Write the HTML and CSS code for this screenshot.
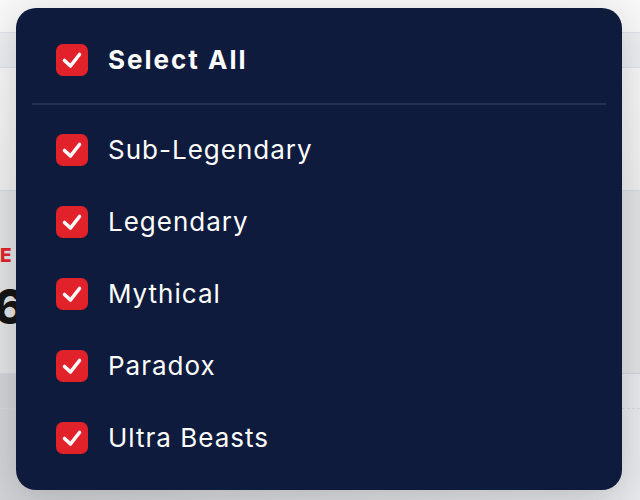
FILE: index.html
```html
<!DOCTYPE html>
<html lang="en">
<head>
    <meta charset="UTF-8">
    <meta name="viewport" content="width=device-width, initial-scale=1.0">
    <title>Pokemon Filter</title>
    <link rel="stylesheet" href="styles.css">
</head>
<body>
    <div id="page">
        <div class="top-bar"></div>
        <div class="tab-bar"></div>
        <div class="hero"></div>
        <div class="stats">
            <div class="stat-label">EXCLUSIVE</div>
            <div class="stat-value">36</div>
        </div>
        <div class="list-area">
            <div class="list-row"></div>
        </div>

        <!-- Category filter dropdown -->
        <div class="filter-menu">
            <label class="filter-item select-all">
                <span class="check">
                    <svg viewBox="0 0 32 32"><polyline points="8.5,16.5 14.5,22 23.5,10.5"/></svg>
                </span>
                <span class="filter-text">Select All</span>
            </label>
            <div class="divider"></div>
            <label class="filter-item">
                <span class="check">
                    <svg viewBox="0 0 32 32"><polyline points="8.5,16.5 14.5,22 23.5,10.5"/></svg>
                </span>
                <span class="filter-text">Sub-Legendary</span>
            </label>
            <label class="filter-item">
                <span class="check">
                    <svg viewBox="0 0 32 32"><polyline points="8.5,16.5 14.5,22 23.5,10.5"/></svg>
                </span>
                <span class="filter-text">Legendary</span>
            </label>
            <label class="filter-item">
                <span class="check">
                    <svg viewBox="0 0 32 32"><polyline points="8.5,16.5 14.5,22 23.5,10.5"/></svg>
                </span>
                <span class="filter-text">Mythical</span>
            </label>
            <label class="filter-item">
                <span class="check">
                    <svg viewBox="0 0 32 32"><polyline points="8.5,16.5 14.5,22 23.5,10.5"/></svg>
                </span>
                <span class="filter-text">Paradox</span>
            </label>
            <label class="filter-item">
                <span class="check">
                    <svg viewBox="0 0 32 32"><polyline points="8.5,16.5 14.5,22 23.5,10.5"/></svg>
                </span>
                <span class="filter-text">Ultra Beasts</span>
            </label>
        </div>
    </div>
</body>
</html>
```

FILE: styles.css
```css
body {
    margin: 0;
    padding: 0;
    font-family: 'Inter', 'Lato', sans-serif;
    background-color: #e6e7ea;
    overflow: hidden;
}

#page {
    width: 640px;
    height: 500px;
    position: relative;
    overflow: hidden;
}

.top-bar {
    height: 32px;
    background-color: #f8f8f9;
    border-bottom: 1px solid #dde2ea;
}

.tab-bar {
    height: 34px;
    background-color: #eceef2;
    border-bottom: 1px solid #dde2ea;
}

.hero {
    height: 122px;
    background: linear-gradient(to bottom, #f7f7f8, #efeff0);
    border-bottom: 1px solid #d8dce2;
}

.stats {
    height: 183px;
    background-color: #e2e3e5;
    border-bottom: 1px solid #d3d7dd;
    box-sizing: border-box;
    padding-top: 54px;
}

.stat-label {
    color: #e1222b;
    font-weight: 800;
    font-size: 19px;
    letter-spacing: 9px;
    line-height: 22px;
}

.stat-value {
    color: #151515;
    font-weight: 800;
    font-size: 48px;
    line-height: 52px;
    margin-top: 14px;
    margin-left: -38px;
}

.list-area {
    height: 130px;
    background: linear-gradient(to right, #d2d3d6, #e9eaed);
}

.list-row {
    height: 34px;
    border-bottom: 1px dashed #d6d8dc;
}

/* Dropdown */
.filter-menu {
    position: absolute;
    top: 8px;
    left: 16px;
    width: 606px;
    height: 482px;
    box-sizing: border-box;
    background-color: #0f1b3d;
    border-radius: 20px;
    padding: 36px 16px 20px;
    box-shadow: 0 10px 40px rgba(0, 0, 0, 0.18);
}

.filter-item {
    display: flex;
    align-items: center;
    gap: 20px;
    height: 32px;
    padding: 0 24px;
    color: #ffffff;
    margin-bottom: 40px;
}

.filter-item:last-child {
    margin-bottom: 0;
}

.select-all {
    margin-bottom: 0;
}

.check {
    width: 32px;
    height: 32px;
    border-radius: 7px;
    background-color: #e1222b;
    flex-shrink: 0;
    display: flex;
}

.check svg {
    width: 32px;
    height: 32px;
}

.check polyline {
    fill: none;
    stroke: #ffffff;
    stroke-width: 3.6;
    stroke-linecap: round;
    stroke-linejoin: round;
}

.filter-text {
    font-size: 26px;
    letter-spacing: 1px;
    line-height: 32px;
}

.select-all .filter-text {
    font-weight: 700;
    letter-spacing: 2px;
}

.divider {
    height: 2px;
    background-color: #25324f;
    margin: 27px 0 29px;
}
```
